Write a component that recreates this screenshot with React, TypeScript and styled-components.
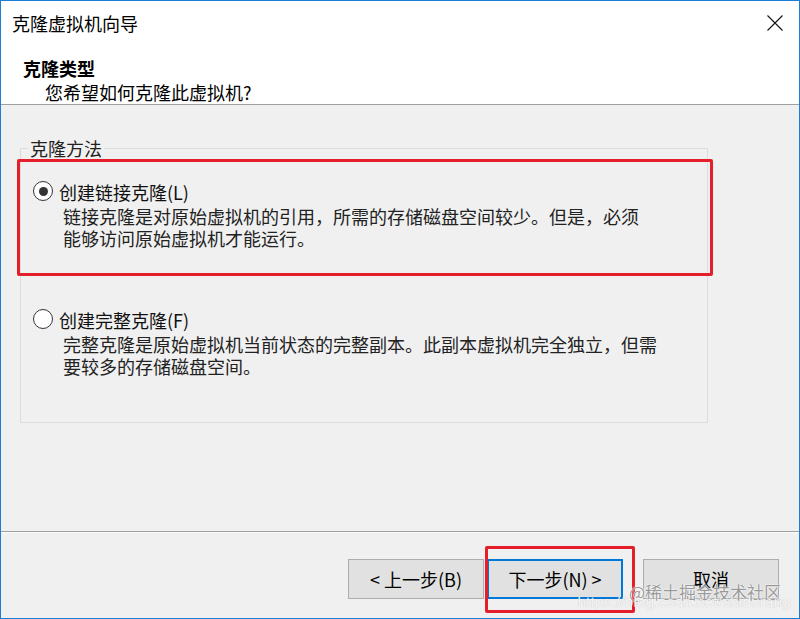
import React from "react";
import styled, { createGlobalStyle } from "styled-components";

const Global = createGlobalStyle`
  html, body { margin: 0; padding: 0; background: #f0f0f0; overflow: hidden; }
  * { box-sizing: border-box; }
`;

const FONT = `"Noto Sans CJK SC", "Noto Sans", sans-serif`;

const Window = styled.div`
  position: relative;
  width: 800px;
  height: 619px;
  border: 1px solid #1a7fd4;
  display: flex;
  flex-direction: column;
  background: #f0f0f0;
  font-family: ${FONT};
  color: #000;
  font-size: 18px;
  line-height: 22px;
`;

const TitleBar = styled.div`
  height: 44px;
  flex: none;
  display: flex;
  align-items: center;
  justify-content: space-between;
  padding: 0 16px 0 11px;
  background: #fff;
`;

const TitleText = styled.div`
  font-size: 18px;
`;

const CloseIcon = styled.svg`
  width: 16px;
  height: 16px;
  display: block;
`;

const Header = styled.div`
  flex: none;
  background: #fff;
  padding: 12px 0 1px 22px;
  border-bottom: 1px solid #a0a0a0;
`;

const HeaderTitle = styled.div`
  font-weight: 700;
`;

const HeaderSub = styled.div`
  margin-top: 2px;
  padding-left: 22px;
`;

const Body = styled.div`
  flex: 1;
  padding: 32px 91px 0 19px;
`;

const Group = styled.fieldset`
  margin: 0;
  padding: 0;
  border: 1px solid #dcdcdc;
  min-width: 0;
`;

const Legend = styled.legend`
  margin-left: 7px;
  padding: 0 2px;
  color: #222;
`;

const Options = styled.div`
  display: flex;
  flex-direction: column;
  gap: 60px;
  padding: 22px 0 45px 12px;
`;

const Option = styled.div`
  display: flex;
  flex-direction: column;
`;

const OptionHead = styled.div`
  display: flex;
  align-items: flex-start;
  gap: 6px;
`;

const Radio = styled.span<{ $checked?: boolean }>`
  width: 20px;
  height: 20px;
  flex: none;
  border-radius: 50%;
  border: 1.5px solid #333;
  background: #fff;
  display: flex;
  align-items: center;
  justify-content: center;
  &::after {
    content: "";
    width: 9px;
    height: 9px;
    border-radius: 50%;
    background: #333;
    display: ${(p) => (p.$checked ? "block" : "none")};
  }
`;

const OptionLabel = styled.span`
  color: #111;
`;

const Desc = styled.div`
  margin-top: 2px;
  padding-left: 30px;
  white-space: nowrap;
  color: #222;
`;

const Footer = styled.div`
  flex: none;
  height: 87px;
  border-top: 1px solid #a0a0a0;
  box-shadow: inset 0 1px 0 #fafafa;
  display: flex;
  justify-content: flex-end;
  align-items: flex-start;
  padding: 27px 20px 0 0;
`;

const NavGroup = styled.div`
  display: flex;
  gap: 3px;
`;

const Button = styled.button<{ $focused?: boolean }>`
  width: 136px;
  height: 40px;
  margin: 0;
  padding: 0;
  font-family: ${FONT};
  font-size: 18px;
  line-height: 22px;
  color: #000;
  background: #e1e1e1;
  border: ${(p) => (p.$focused ? "2px solid #0078d7" : "1px solid #adadad")};
  display: flex;
  align-items: center;
  justify-content: center;
`;

const CancelButton = styled(Button)`
  margin-left: 20px;
`;

const Annotation = styled.div`
  position: absolute;
  border: 3px solid #e41e2b;
  border-radius: 2px;
  pointer-events: none;
`;

const Watermark = styled.div`
  position: absolute;
  right: 19px;
  bottom: 8px;
  display: flex;
  flex-direction: column;
  align-items: flex-end;
  pointer-events: none;
`;

const WatermarkBrand = styled.span`
  font-size: 17px;
  line-height: 20px;
  color: rgba(120, 120, 120, 0.75);
  text-shadow: 0 0 2px #fff, 0 0 1px #fff;
  margin-right: -1px;
`;

const WatermarkUrl = styled.span`
  font-family: "Liberation Sans", Arial, sans-serif;
  font-size: 15px;
  line-height: 16px;
  letter-spacing: 0.3px;
  color: rgba(255, 255, 255, 0.85);
  text-shadow: 0 0 1px rgba(150, 150, 150, 0.6);
  margin-top: -8px;
  margin-right: -11px;
`;

export default function App() {
  return (
    <>
      <Global />
      <Window>
        <TitleBar>
          <TitleText>克隆虚拟机向导</TitleText>
          <CloseIcon viewBox="0 0 16 16">
            <path d="M0.5 0.5 L15.5 15.5 M15.5 0.5 L0.5 15.5" stroke="#111" strokeWidth="1.1" fill="none" />
          </CloseIcon>
        </TitleBar>
        <Header>
          <HeaderTitle>克隆类型</HeaderTitle>
          <HeaderSub>您希望如何克隆此虚拟机?</HeaderSub>
        </Header>
        <Body>
          <Group>
            <Legend>克隆方法</Legend>
            <Options>
              <Option>
                <OptionHead>
                  <Radio $checked />
                  <OptionLabel>创建链接克隆(L)</OptionLabel>
                </OptionHead>
                <Desc>
                  链接克隆是对原始虚拟机的引用，所需的存储磁盘空间较少。但是，必须
                  <br />
                  能够访问原始虚拟机才能运行。
                </Desc>
              </Option>
              <Option>
                <OptionHead>
                  <Radio />
                  <OptionLabel>创建完整克隆(F)</OptionLabel>
                </OptionHead>
                <Desc>
                  完整克隆是原始虚拟机当前状态的完整副本。此副本虚拟机完全独立，但需
                  <br />
                  要较多的存储磁盘空间。
                </Desc>
              </Option>
            </Options>
          </Group>
        </Body>
        <Footer>
          <NavGroup>
            <Button>&lt; 上一步(B)</Button>
            <Button $focused>下一步(N) &gt;</Button>
          </NavGroup>
          <CancelButton>取消</CancelButton>
        </Footer>
        <Annotation style={{ left: 16, top: 158, width: 696, height: 117 }} />
        <Annotation style={{ left: 484, top: 545, width: 150, height: 67 }} />
        <Watermark>
          <WatermarkBrand>@稀土掘金技术社区</WatermarkBrand>
          <WatermarkUrl>https://blog.csdn.net/shidurang</WatermarkUrl>
        </Watermark>
      </Window>
    </>
  );
}
